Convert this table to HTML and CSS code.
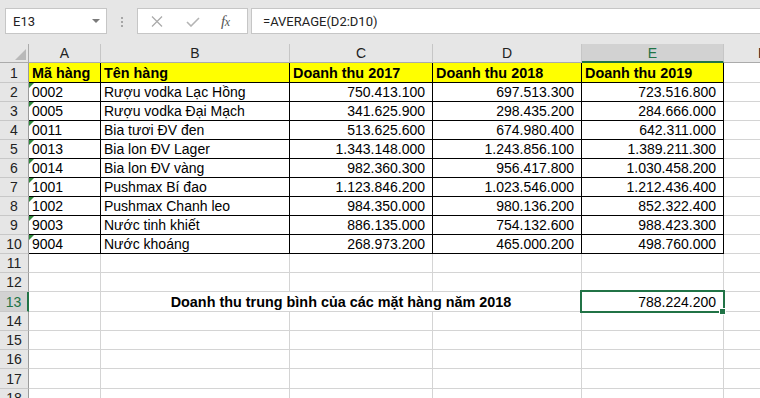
FILE: index.html
```html
<!DOCTYPE html>
<html lang="vi">
<head>
<meta charset="utf-8">
<title>Excel</title>
<link rel="stylesheet" href="styles.css">
</head>
<body>
<div class="toolbar">
  <div class="namebox">E13
    <svg class="arrow" width="8" height="4" viewBox="0 0 8 4"><path d="M0 0H8L4 4Z" fill="#7a7a7a"/></svg>
  </div>
  <div class="dots"><span></span><span></span><span></span></div>
  <div class="fxbox">
    <svg class="ico-x" width="12" height="11" viewBox="0 0 12 11"><path d="M1 0.5L11 10.5M11 0.5L1 10.5" stroke="#ababab" stroke-width="1.3" fill="none"/></svg>
    <svg class="ico-ok" width="14" height="10" viewBox="0 0 14 10"><path d="M1 5L5 9L13 1" stroke="#b4b4b4" stroke-width="1.6" fill="none"/></svg>
    <span class="fx">f<span class="fxx">x</span></span>
  </div>
  <div class="formula">=AVERAGE(D2:D10)</div>
</div>
<div class="sheet">
  <div class="hd corner"><svg width="11" height="11" viewBox="0 0 11 11"><path d="M11 0V11H0Z" fill="#b9b9b9"/></svg></div>
  <div class="hd col">A</div><div class="hd col">B</div><div class="hd col">C</div><div class="hd col">D</div><div class="hd col sel">E</div><div class="hd col last">F</div>

  <div class="hd row">1</div>
  <div class="c k y">Mã hàng</div><div class="c k y">Tên hàng</div><div class="c k y">Doanh thu 2017</div><div class="c k y">Doanh thu 2018</div><div class="c k y">Doanh thu 2019</div><div class="c"></div>

  <div class="hd row">2</div>
  <div class="c k g">0002</div><div class="c k">Rượu vodka Lạc Hồng</div><div class="c k r">750.413.100</div><div class="c k r">697.513.300</div><div class="c k r">723.516.800</div><div class="c"></div>

  <div class="hd row">3</div>
  <div class="c k g">0005</div><div class="c k">Rượu vodka Đại Mạch</div><div class="c k r">341.625.900</div><div class="c k r">298.435.200</div><div class="c k r">284.666.000</div><div class="c"></div>

  <div class="hd row">4</div>
  <div class="c k g">0011</div><div class="c k">Bia tươi ĐV đen</div><div class="c k r">513.625.600</div><div class="c k r">674.980.400</div><div class="c k r">642.311.000</div><div class="c"></div>

  <div class="hd row">5</div>
  <div class="c k g">0013</div><div class="c k">Bia lon ĐV Lager</div><div class="c k r">1.343.148.000</div><div class="c k r">1.243.856.100</div><div class="c k r">1.389.211.300</div><div class="c"></div>

  <div class="hd row">6</div>
  <div class="c k g">0014</div><div class="c k">Bia lon ĐV vàng</div><div class="c k r">982.360.300</div><div class="c k r">956.417.800</div><div class="c k r">1.030.458.200</div><div class="c"></div>

  <div class="hd row">7</div>
  <div class="c k g">1001</div><div class="c k">Pushmax Bí đao</div><div class="c k r">1.123.846.200</div><div class="c k r">1.023.546.000</div><div class="c k r">1.212.436.400</div><div class="c"></div>

  <div class="hd row">8</div>
  <div class="c k g">1002</div><div class="c k">Pushmax Chanh leo</div><div class="c k r">984.350.000</div><div class="c k r">980.136.200</div><div class="c k r">852.322.400</div><div class="c"></div>

  <div class="hd row">9</div>
  <div class="c k g">9003</div><div class="c k">Nước tinh khiết</div><div class="c k r">886.135.000</div><div class="c k r">754.132.600</div><div class="c k r">988.423.300</div><div class="c"></div>

  <div class="hd row">10</div>
  <div class="c k g">9004</div><div class="c k">Nước khoáng</div><div class="c k r">268.973.200</div><div class="c k r">465.000.200</div><div class="c k r">498.760.000</div><div class="c"></div>

  <div class="hd row">11</div>
  <div class="c"></div><div class="c"></div><div class="c"></div><div class="c"></div><div class="c"></div><div class="c"></div>

  <div class="hd row">12</div>
  <div class="c"></div><div class="c"></div><div class="c"></div><div class="c"></div><div class="c"></div><div class="c"></div>

  <div class="hd row rsel">13</div>
  <div class="c"></div><div class="c merged">Doanh thu trung bình của các mặt hàng năm 2018</div><div class="c r">788.224.200</div><div class="c"></div>

  <div class="hd row">14</div>
  <div class="c"></div><div class="c"></div><div class="c"></div><div class="c"></div><div class="c"></div><div class="c"></div>

  <div class="hd row">15</div>
  <div class="c"></div><div class="c"></div><div class="c"></div><div class="c"></div><div class="c"></div><div class="c"></div>

  <div class="hd row">16</div>
  <div class="c"></div><div class="c"></div><div class="c"></div><div class="c"></div><div class="c"></div><div class="c"></div>

  <div class="hd row">17</div>
  <div class="c"></div><div class="c"></div><div class="c"></div><div class="c"></div><div class="c"></div><div class="c"></div>

  <div class="hd row">18</div>
  <div class="c"></div><div class="c"></div><div class="c"></div><div class="c"></div><div class="c"></div><div class="c"></div>

  <div class="selection"></div>
  <div class="handle"></div>
</div>
</body>
</html>
```
FILE: styles.css
```css
html, body {
  margin: 0;
  padding: 0;
}
body {
  width: 760px;
  height: 398px;
  overflow: hidden;
  background: #ffffff;
  font-family: "Liberation Sans", Arial, sans-serif;
  color: #000;
}

/* ---------- formula bar ---------- */
.toolbar {
  height: 44px;
  box-sizing: border-box;
  background: #e6e6e6;
  display: flex;
  align-items: flex-start;
  padding: 8px 0 0 5px;
}
.namebox {
  position: relative;
  width: 102px;
  height: 26px;
  box-sizing: border-box;
  border: 1px solid #c6c6c6;
  background: #fff;
  display: flex;
  align-items: center;
  padding: 1px 0 0 7px;
  font: 13px Roboto, "Liberation Sans", sans-serif;
  color: #222;
}
.namebox .arrow {
  position: absolute;
  right: 6px;
  top: 10px;
}
.dots {
  margin: 9px 0 0 14px;
  width: 3px;
  display: flex;
  flex-direction: column;
  gap: 2px;
}
.dots span {
  width: 2px;
  height: 2px;
  background: #a6a6a6;
}
.fxbox {
  margin-left: 13px;
  width: 111px;
  height: 26px;
  box-sizing: border-box;
  border: 1px solid #c6c6c6;
  background: #fff;
  display: flex;
  align-items: center;
  padding-left: 13px;
}
.ico-x {
  margin-top: 1px;
}
.ico-ok {
  margin: 2px 0 0 23px;
}
.fx {
  margin-left: 21px;
  font: italic 15px "Liberation Serif", "DejaVu Serif", serif;
  color: #555;
  letter-spacing: -0.5px;
}
.fxx {
  font-size: 12px;
}
.formula {
  margin-left: 3px;
  flex: 1;
  height: 26px;
  box-sizing: border-box;
  border: 1px solid #c6c6c6;
  border-right: none;
  background: #fff;
  display: flex;
  align-items: center;
  padding: 1px 0 0 11px;
  font: 13px Roboto, "Liberation Sans", sans-serif;
  color: #222;
}

/* ---------- sheet grid ---------- */
.sheet {
  position: relative;
  display: grid;
  grid-template-columns: 29px 72px 189px 143px 149px 142px 1fr;
  grid-template-rows: 19px 20px repeat(10, 19px) 19px 20px 19px 19px 19px 20px 19px;
  font-size: 14px;
}
.hd {
  background: #e6e6e6;
  box-sizing: border-box;
  color: #222;
  display: flex;
  align-items: flex-end;
  justify-content: center;
  line-height: 16px;
  padding-bottom: 1px;
}
.corner {
  border-right: 1px solid #ababab;
  border-bottom: 1px solid #ababab;
  justify-content: flex-end;
  padding: 0 2px 2px 0;
}
.col {
  border-right: 1px solid #c6c6c6;
  border-bottom: 1px solid #ababab;
}
.col.last {
  justify-content: flex-start;
  padding-left: 34px;
  border-right: none;
}
.col.sel {
  background: #d2d2d2;
  color: #217346;
  border-bottom: 2px solid #217346;
  padding-bottom: 0;
}
.row {
  border-right: 1px solid #9b9b9b;
  border-bottom: 1px solid #c8c8c8;
}
.row.rsel {
  background: #d2d2d2;
  color: #217346;
  border-right: 2px solid #217346;
}

.c {
  position: relative;
  box-sizing: border-box;
  border-right: 1px solid #d4d4d4;
  border-bottom: 1px solid #d4d4d4;
  display: flex;
  align-items: flex-end;
  padding: 0 3px 1px 3px;
  line-height: 16px;
  white-space: nowrap;
  overflow: hidden;
}
.c.k {
  border-right-color: #000;
  border-bottom-color: #000;
}
.c.y {
  background: #ffff00;
  font-weight: bold;
  font-size: 14.4px;
}
.c.r {
  justify-content: flex-end;
  padding-right: 7px;
}
.c.g::before {
  content: "";
  position: absolute;
  top: 0;
  left: 0;
  border-top: 5px solid #2f8a3c;
  border-right: 5px solid transparent;
}
.c.merged {
  grid-column: span 3;
  justify-content: center;
  font-weight: bold;
  font-size: 14.4px;
}

.selection {
  position: absolute;
  left: 580px;
  top: 246px;
  width: 145px;
  height: 23px;
  box-sizing: border-box;
  border: 2px solid #217346;
}
.handle {
  position: absolute;
  left: 719px;
  top: 264px;
  width: 7px;
  height: 7px;
  box-sizing: border-box;
  background: #217346;
  border: 1px solid #fff;
}
```
